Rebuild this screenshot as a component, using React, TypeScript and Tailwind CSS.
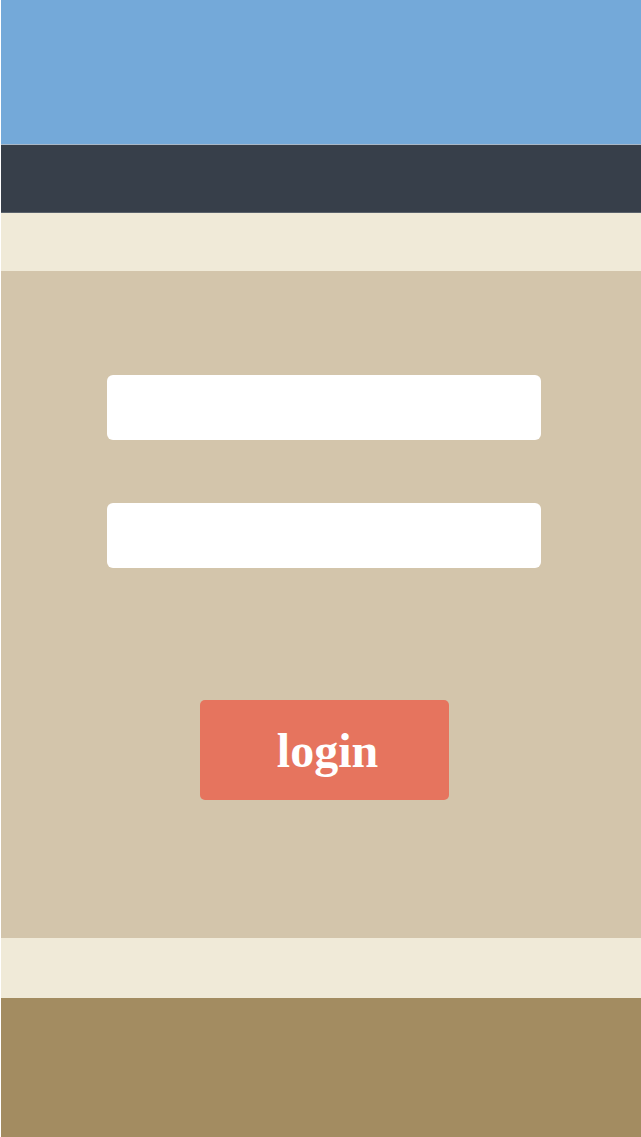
export default function App() {
  return (
    <div className="w-[641px] h-[1137px] flex flex-col bg-white pl-px overflow-hidden">
      <div className="h-[144px] bg-[#74a9d9]" />
      <div className="h-px bg-[#a9b8c8]" />
      <div className="h-[67px] bg-[#373f4a]" />
      <div className="h-px bg-[#5a626b]" />
      <div className="h-[58px] bg-[#f0ead8]" />
      <div className="h-[667px] bg-[#d3c5ab] flex flex-col items-center">
        <div className="mt-[104px] ml-[5px] w-[434px] h-[65px] bg-white rounded-[6px]" />
        <div className="mt-[63px] ml-[5px] w-[434px] h-[65px] bg-white rounded-[6px]" />
        <div
          className="mt-[132px] ml-[7px] w-[249px] h-[100px] bg-[#e6745e] rounded-[5px] flex items-center justify-center text-white font-bold text-[48px] pt-[2px] pl-[6px]"
          style={{ fontFamily: '"Liberation Serif", serif' }}
        >
          login
        </div>
      </div>
      <div className="h-[60px] bg-[#f0ead8]" />
      <div className="flex-1 bg-[#a38c61]" />
    </div>
  );
}
